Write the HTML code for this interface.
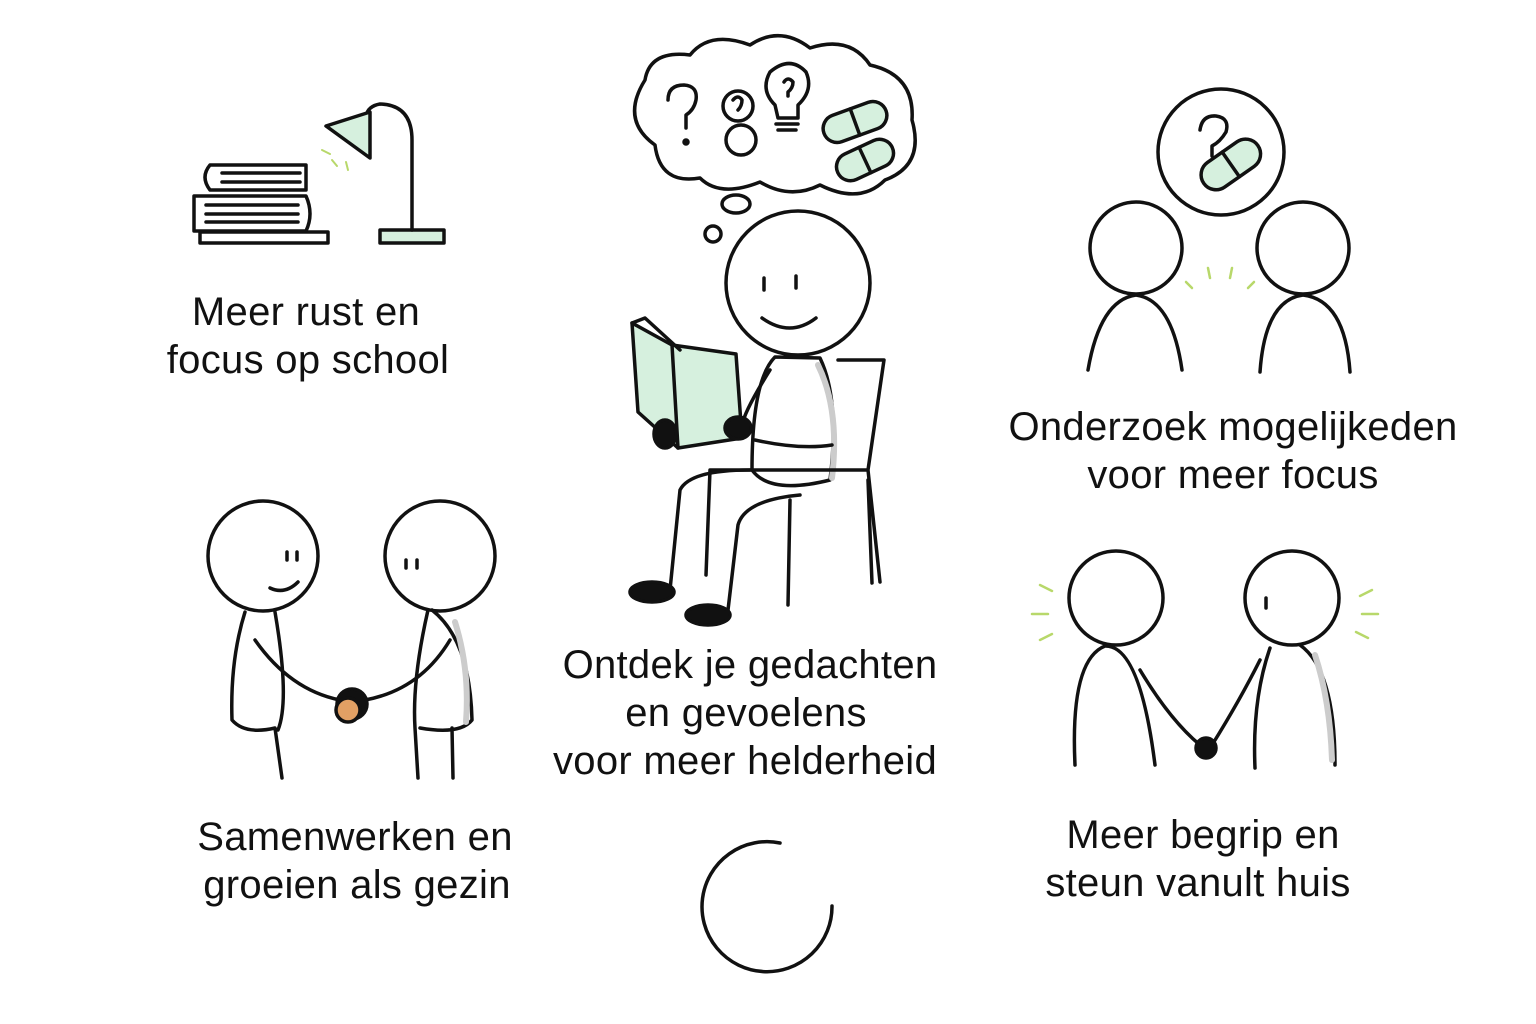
<!DOCTYPE html>
<html><head><meta charset="utf-8"><style>
html,body{margin:0;padding:0;background:#fff;}
svg{display:block}
text{font-family:"Liberation Sans",sans-serif;font-size:40px;letter-spacing:0.3px;fill:#111;text-anchor:middle}
</style></head><body>
<svg width="1536" height="1024" viewBox="0 0 1536 1024" xmlns="http://www.w3.org/2000/svg">
<g fill="none" stroke="#111" stroke-width="3.5" stroke-linecap="round" stroke-linejoin="round">
<rect x="200" y="232" width="128" height="11" fill="#fff"/>
<path d="M194 196 H306 Q314 214 306 231 H194 Z" fill="#fff"/>
<path d="M210 165 H306 V190 H210 Q200 177 210 165Z" fill="#fff"/>
<path d="M222 173 H300 M222 182 H300 M206 205 H298 M206 214 H298 M206 222 H298"/>
<rect x="380" y="230" width="64" height="13" fill="#d6f0de"/>
<path d="M412 230 V140 Q412 105 380 104 Q368 106 366 116"/>
<path d="M326 126 L370 112 L370 158 Z" fill="#d6f0de"/>
<path d="M322 150 l8 4 M332 160 l5 6 M346 162 l2 8" stroke="#b8d86a" stroke-width="2"/>
<path d="M655 145 Q620 120 645 80 Q650 50 690 55 Q710 30 750 45 Q780 25 810 48 Q850 35 870 65 Q915 75 912 120 Q925 165 885 180 Q860 205 820 185 Q790 200 760 182 Q720 198 700 178 Q660 185 655 145Z" fill="#fff"/>
<ellipse cx="736" cy="204" rx="14" ry="9"/>
<circle cx="713" cy="234" r="8"/>
<path d="M668 100 Q668 85 684 85 Q698 86 696 100 Q694 110 686 115 V128"/>
<circle cx="686" cy="142" r="2" fill="#111"/>
<circle cx="738" cy="106" r="15"/><circle cx="741" cy="140" r="15"/>
<path d="M733 100 Q738 94 742 100 Q742 106 738 110"/>
<path d="M775 105 Q760 90 770 72 Q790 55 806 72 Q814 90 798 105 V118 H778 Z"/>
<path d="M776 124 H798 M778 130 H796"/>
<path d="M784 82 Q788 76 793 82 Q793 88 788 92 V96"/>
<g transform="rotate(-20 855 122)"><rect x="822" y="108" width="66" height="28" rx="14" fill="#d6f0de"/><path d="M855 108 V136"/></g>
<g transform="rotate(-25 865 160)"><rect x="835" y="146" width="60" height="28" rx="14" fill="#d6f0de"/><path d="M865 146 V174"/></g>
<circle cx="798" cy="283" r="72" fill="#fff"/>
<path d="M764 278 v12 M796 276 v12 M762 318 Q790 338 816 318"/>
<path d="M775 357 Q752 380 752 470 Q770 495 830 480 Q840 400 820 358 Z" fill="#fff"/>
<path d="M818 365 Q840 410 832 478" stroke="#ccc" stroke-width="6"/>
<path d="M838 360 H884 L868 470 L880 582 M868 470 H710 L706 575 M790 500 L788 605 M868 480 L872 583"/>
<path d="M750 470 Q690 470 680 490 L670 590 M800 495 Q745 500 738 525 L728 610"/>
<ellipse cx="652" cy="592" rx="22" ry="10" fill="#111"/>
<ellipse cx="708" cy="615" rx="22" ry="10" fill="#111"/>
<path d="M632 323 L672 345 L736 354 L742 438 L678 448 L638 412 Z" fill="#d6f0de"/>
<path d="M632 323 L645 318 L680 350 M672 345 L678 448"/>
<path d="M770 370 Q745 410 742 425 M755 440 Q800 450 832 445"/>
<ellipse cx="665" cy="434" rx="11" ry="14" fill="#111"/>
<ellipse cx="738" cy="428" rx="13" ry="11" fill="#111"/>
<circle cx="1221" cy="152" r="63" fill="#fff"/>
<path d="M1200 130 Q1202 115 1216 116 Q1230 118 1226 132 Q1220 142 1212 146 V156"/>
<circle cx="1212" cy="168" r="2.5" fill="#111"/>
<g transform="rotate(-35 1230 165)"><rect x="1198" y="150" width="66" height="30" rx="15" fill="#d6f0de"/><path d="M1231 150 V180"/></g>
<circle cx="1136" cy="248" r="46" fill="#fff"/><circle cx="1303" cy="248" r="46" fill="#fff"/>
<path d="M1088 370 Q1100 300 1136 295 Q1172 300 1182 370 M1260 372 Q1265 300 1303 295 Q1345 300 1350 372"/>
<path d="M1186 282 l6 6 M1208 268 l2 10 M1232 268 l-2 10 M1254 282 l-6 6" stroke="#b8d86a" stroke-width="2.5"/>
<circle cx="263" cy="556" r="55" fill="#fff"/><circle cx="440" cy="556" r="55" fill="#fff"/>
<path d="M287 552 v8 M297 552 v8 M270 588 Q285 595 298 582 M406 560 v8 M417 560 v8"/>
<path d="M245 612 Q230 660 232 720 Q245 735 275 728 L282 778 M278 730 Q290 700 275 612"/>
<path d="M428 610 Q412 680 415 728 L418 778 M452 728 L453 778 M432 610 Q470 640 472 720 Q460 735 420 728"/>
<path d="M455 622 Q470 670 466 722" stroke="#ccc" stroke-width="6"/>
<path d="M255 640 Q290 690 340 700 M450 640 Q420 690 365 700"/>
<circle cx="352" cy="704" r="15" fill="#111"/><circle cx="348" cy="710" r="12" fill="#e2a064"/>
<circle cx="1116" cy="598" r="47" fill="#fff"/><circle cx="1292" cy="598" r="47" fill="#fff"/>
<path d="M1266 598 v10"/>
<path d="M1075 765 Q1070 660 1105 646 Q1140 645 1155 765 M1140 670 Q1170 720 1200 745 M1260 660 Q1240 700 1212 745 M1270 648 Q1252 700 1255 768 M1300 645 Q1335 670 1335 765"/>
<path d="M1315 655 Q1330 700 1332 760" stroke="#ccc" stroke-width="6"/>
<circle cx="1206" cy="748" r="10" fill="#111"/>
<path d="M1040 585 l12 6 M1032 614 h16 M1040 640 l12 -6 M1372 590 l-12 6 M1378 614 h-16 M1368 638 l-12 -6" stroke="#b8d86a" stroke-width="2.5"/>
<path d="M780 843 A65 65 0 1 0 832 906"/>
</g>
<text x="306" y="325">Meer rust en</text>
<text x="308" y="373">focus op school</text>
<text x="1233" y="440">Onderzoek mogelijkeden</text>
<text x="1233" y="488">voor meer focus</text>
<text x="750" y="678">Ontdek je gedachten</text>
<text x="746" y="726">en gevoelens</text>
<text x="745" y="774">voor meer helderheid</text>
<text x="355" y="850">Samenwerken en</text>
<text x="357" y="898">groeien als gezin</text>
<text x="1203" y="848">Meer begrip en</text>
<text x="1198" y="896">steun vanult huis</text>
</svg>
</body></html>
